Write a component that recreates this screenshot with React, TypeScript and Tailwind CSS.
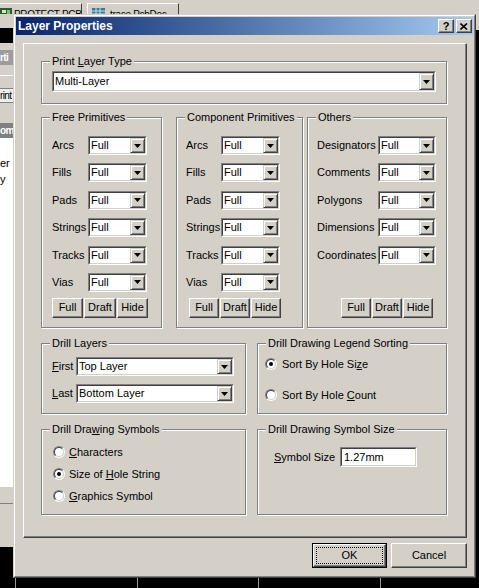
import React from 'react';

const FONT = "font-['Liberation_Sans',Arial,sans-serif]";
const RAISED =
  'bg-[#d4d0c8] border border-t-white border-l-white border-r-[#404040] border-b-[#404040] shadow-[inset_-1px_-1px_0_#808080]';

function Arrow() {
  return (
    <svg width="7" height="4" viewBox="0 0 7 4">
      <polygon points="0,0 7,0 3.5,4" fill="#000" />
    </svg>
  );
}

function Combo({ value, className }: { value: string; className: string }) {
  return (
    <div className={`flex shrink-0 border border-t-[#808080] border-l-[#808080] border-r-white border-b-white ${className}`}>
      <div className="flex flex-1 min-w-0 border border-t-[#404040] border-l-[#404040] border-r-[#d4d0c8] border-b-[#d4d0c8] bg-white">
        <span className="flex flex-1 items-center pl-[1px] whitespace-nowrap overflow-hidden">{value}</span>
        <div className="w-[15px] shrink-0 flex items-center justify-center bg-[#d4d0c8] border border-t-[#d4d0c8] border-l-[#d4d0c8] border-r-[#404040] border-b-[#404040] shadow-[inset_1px_1px_0_#fff,inset_-1px_-1px_0_#808080]">
          <Arrow />
        </div>
      </div>
    </div>
  );
}

function Group({ title, className, children }: { title: React.ReactNode; className: string; children?: React.ReactNode }) {
  return (
    <div className={`relative shrink-0 border border-[#808080] shadow-[inset_1px_1px_0_#fff,1px_1px_0_#fff] ${className}`}>
      <span className="absolute -top-[7px] left-[8px] bg-[#d4d0c8] px-[2px] leading-[13px] whitespace-nowrap">{title}</span>
      {children}
    </div>
  );
}

function Radio({ checked }: { checked?: boolean }) {
  return (
    <div className="w-[12px] h-[12px] shrink-0 rounded-full border border-t-[#808080] border-l-[#808080] border-r-white border-b-white">
      <div className="w-full h-full rounded-full border border-t-[#404040] border-l-[#404040] border-r-[#d4d0c8] border-b-[#d4d0c8] bg-white flex items-center justify-center">
        {checked && <div className="w-[4px] h-[4px] rounded-full bg-black" />}
      </div>
    </div>
  );
}

function RadioRow({ checked, gap, children }: { checked?: boolean; gap: string; children: React.ReactNode }) {
  return (
    <div className={`flex items-center h-[12px] ${gap}`}>
      <Radio checked={checked} />
      <span className="whitespace-nowrap leading-[13px]">{children}</span>
    </div>
  );
}

function Btn({ children, className }: { children: React.ReactNode; className: string }) {
  return <div className={`flex items-center justify-center shrink-0 ${RAISED} ${className}`}>{children}</div>;
}

function PrimRow({ label, col, combo }: { label: string; col: string; combo: string }) {
  return (
    <div className="flex items-center h-[19px]">
      <span className={`shrink-0 whitespace-nowrap ${col}`}>{label}</span>
      <Combo value="Full" className={`h-[19px] ${combo}`} />
    </div>
  );
}

function ModeButtons({ className, w1, w2, w3 }: { className: string; w1: string; w2: string; w3: string }) {
  return (
    <div className={`flex gap-[1px] mt-[6px] ${className}`}>
      <Btn className={`h-[20px] ${w1}`}>Full</Btn>
      <Btn className={`h-[20px] ${w2}`}>Draft</Btn>
      <Btn className={`h-[20px] ${w3}`}>Hide</Btn>
    </div>
  );
}

const prims = ['Arcs', 'Fills', 'Pads', 'Strings', 'Tracks', 'Vias'];
const others = ['Designators', 'Comments', 'Polygons', 'Dimensions', 'Coordinates'];

function LeftStrip() {
  return (
    <div className="w-[13px] shrink-0 flex flex-col overflow-hidden whitespace-nowrap text-[10px] tracking-[-0.6px]">
      <div className="h-[14px] shrink-0" />
      <div className="h-[15px] shrink-0 bg-black" />
      <div className="h-[7px] shrink-0" />
      <div className="h-[15px] shrink-0 bg-[#9c9c9c] text-white font-bold flex items-center">rti</div>
      <div className="h-[10px] shrink-0" />
      <div className="h-px shrink-0 bg-white" />
      <div className="h-[12px] shrink-0" />
      <div className="h-[15px] shrink-0 bg-[#efefef] border-y border-[#808080] flex items-center">rint</div>
      <div className="h-[20px] shrink-0" />
      <div className="h-[15px] shrink-0 bg-[#808080] text-white font-bold flex items-center">om</div>
      <div className="h-[349px] shrink-0 bg-white pt-[17px] leading-[16px] text-[11px] tracking-normal">
        <div>er</div>
        <div>y</div>
      </div>
      <div className="h-[16px] shrink-0" />
      <div className="h-px shrink-0 bg-[#808080]" />
      <div className="h-[43px] shrink-0" />
      <div className="flex-1 bg-black" />
    </div>
  );
}

function TitleBar() {
  return (
    <div className="h-[18px] shrink-0 flex items-center bg-linear-to-r from-[#0a246a] to-[#a6caf0] pl-[2px] pr-[1px]">
      <span className="flex-1 text-white font-bold text-[12px] leading-[14px]">Layer Properties</span>
      <div className="flex gap-[2px]">
        <Btn className="w-[16px] h-[14px] font-bold text-[11px] leading-none">?</Btn>
        <Btn className="w-[16px] h-[14px]">
          <svg width="8" height="7" viewBox="0 0 8 7">
            <path d="M0.5 0.5L7 6.5M7 0.5L0.5 6.5" stroke="#000" strokeWidth="1.6" />
          </svg>
        </Btn>
      </div>
    </div>
  );
}

function Dialog() {
  return (
    <div className="w-[463px] shrink-0 flex flex-col border border-t-[#d4d0c8] border-l-[#d4d0c8] border-r-[#404040] border-b-[#404040]">
      <div className="flex flex-1 flex-col border border-t-white border-l-white border-r-[#808080] border-b-[#808080] p-px">
        <TitleBar />
        <div className="flex flex-1 flex-col pl-[7px] pt-[8px]">
          {/* page */}
          <div className="w-[444px] h-[495px] shrink-0 flex flex-col pl-[17px] pt-[17px] border border-t-white border-l-white border-r-[#404040] border-b-[#404040] shadow-[inset_-1px_-1px_0_#808080]">
            <Group title={<>Print <u>L</u>ayer Type</>} className="w-[406px] h-[43px] pl-[10px] pt-[9px]">
              <Combo value="Multi-Layer" className="w-[384px] h-[21px]" />
            </Group>

            <div className="flex mt-[13px]">
              <Group title="Free Primitives" className="w-[121px] h-[211px] pl-[10px] pt-[18px]">
                <div className="flex flex-col gap-[8.4px]">
                  {prims.map(p => (
                    <PrimRow key={p} label={p} col="w-[36px]" combo="w-[59px]" />
                  ))}
                </div>
                <ModeButtons className="" w1="w-[31px]" w2="w-[32px]" w3="w-[31px]" />
              </Group>
              <Group title="Component Primitives" className="ml-[14px] w-[127px] h-[211px] pl-[9px] pt-[18px]">
                <div className="flex flex-col gap-[8.4px]">
                  {prims.map(p => (
                    <PrimRow key={p} label={p} col="w-[35px]" combo="w-[59px]" />
                  ))}
                </div>
                <ModeButtons className="ml-[3px]" w1="w-[30px]" w2="w-[30px]" w3="w-[30px]" />
              </Group>
              <Group title="Others" className="ml-[4px] w-[140px] h-[211px] pl-[9px] pt-[18px]">
                <div className="flex flex-col gap-[8.4px]">
                  {others.map(p => (
                    <PrimRow key={p} label={p} col="w-[61px]" combo="w-[58px]" />
                  ))}
                </div>
                <ModeButtons className="ml-[24px] mt-[33.4px]" w1="w-[30px]" w2="w-[30px]" w3="w-[30px]" />
              </Group>
            </div>

            <div className="flex mt-[15px]">
              <Group title="Drill Layers" className="w-[205px] h-[71px] pl-[10px] pt-[13px]">
                <div className="flex flex-col gap-[8px]">
                  <div className="flex items-center h-[19px]">
                    <span className="w-[24px] shrink-0"><u>F</u>irst</span>
                    <Combo value="Top Layer" className="w-[158px] h-[19px]" />
                  </div>
                  <div className="flex items-center h-[19px]">
                    <span className="w-[24px] shrink-0"><u>L</u>ast</span>
                    <Combo value="Bottom Layer" className="w-[158px] h-[19px]" />
                  </div>
                </div>
              </Group>
              <Group title="Drill Drawing Legend Sorting" className="ml-[11px] w-[190px] h-[71px] pl-[7px] pt-[14px]">
                <div className="flex flex-col gap-[19px]">
                  <RadioRow checked gap="gap-[5px]">Sort By Hole Si<u>z</u>e</RadioRow>
                  <RadioRow gap="gap-[5px]">Sort By Hole <u>C</u>ount</RadioRow>
                </div>
              </Group>
            </div>

            <div className="flex mt-[15px]">
              <Group title={<>Drill Dra<u>w</u>ing Symbols</>} className="w-[205px] h-[86px] pl-[11px] pt-[16px]">
                <div className="flex flex-col gap-[10px]">
                  <RadioRow gap="gap-[4px]"><u>C</u>haracters</RadioRow>
                  <RadioRow checked gap="gap-[4px]">Size of <u>H</u>ole String</RadioRow>
                  <RadioRow gap="gap-[4px]"><u>G</u>raphics Symbol</RadioRow>
                </div>
              </Group>
              <Group title="Drill Drawing Symbol Size" className="ml-[11px] w-[190px] h-[86px] pl-[16px] pt-[17px]">
                <div className="flex items-center h-[20px]">
                  <span className="w-[66px] shrink-0 whitespace-nowrap"><u>S</u>ymbol Size</span>
                  <div className="w-[77px] h-[20px] shrink-0 border border-t-[#808080] border-l-[#808080] border-r-white border-b-white">
                    <div className="w-full h-full flex items-center pl-[2px] bg-white border border-t-[#404040] border-l-[#404040] border-r-[#d4d0c8] border-b-[#d4d0c8]">
                      1.27mm
                    </div>
                  </div>
                </div>
              </Group>
            </div>
          </div>

          {/* buttons */}
          <div className="flex justify-end gap-[4px] pr-[6px] mt-[5px]">
            <div className="w-[75px] h-[25px] border border-black">
              <div className={`w-full h-full p-[2px] ${RAISED}`}>
                <div className="w-full h-full border border-dotted border-black flex items-center justify-center">OK</div>
              </div>
            </div>
            <Btn className="w-[76px] h-[25px]">Cancel</Btn>
          </div>
        </div>
      </div>
    </div>
  );
}

function Tabs() {
  return (
    <div className="h-[14px] shrink-0 flex overflow-hidden text-[10px] tracking-[-0.3px]">
      <div className="w-[82px] shrink-0 mt-[3px] h-[20px] border-t border-white border-r border-r-[#404040] flex items-start pt-[4px]">
        <svg width="13" height="9" viewBox="0 0 13 9" className="shrink-0">
          <rect x="0" y="0" width="12" height="9" fill="#2e5a2e" />
          <rect x="2" y="2" width="4" height="3" fill="#cfe8cf" />
          <rect x="7" y="2" width="3" height="5" fill="#7fbf7f" />
        </svg>
        <span className="ml-[1px] mt-[1px] leading-[12px] whitespace-nowrap">PROTECT PCB</span>
      </div>
      <div className="w-[92px] ml-[5px] shrink-0 mt-[3px] h-[20px] border-t border-l border-white border-r border-r-[#404040] flex items-start pt-[4px] pl-[4px]">
        <svg width="13" height="9" viewBox="0 0 13 9" className="shrink-0">
          <rect x="0" y="0" width="13" height="9" fill="#3c7890" />
          <path d="M0 3H13M0 6H13M4 0V9M8 0V9" stroke="#bfe3ef" strokeWidth="1" />
        </svg>
        <span className="ml-[5px] mt-[1px] leading-[12px] whitespace-nowrap">trace.PcbDoc</span>
      </div>
    </div>
  );
}

export default function App() {
  return (
    <div className={`w-[479px] h-[588px] overflow-hidden bg-[#d4d0c8] flex flex-col text-[11px] leading-[13px] text-black ${FONT}`}>
      <Tabs />
      <div className="flex h-[564px] shrink-0">
        <LeftStrip />
        <Dialog />
        <div className="w-[3px] shrink-0 flex flex-col">
          <div className="h-[16px] shrink-0" />
          <div className="flex-1 bg-black" />
        </div>
      </div>
      <div className="flex-1 flex bg-black">
        <div className="w-[15px] shrink-0" />
        <div className="w-px shrink-0 bg-[#9a9a9a]" />
        <div className="w-[121px] shrink-0" />
        <div className="w-px shrink-0 bg-[#9a9a9a]" />
        <div className="w-[120px] shrink-0" />
        <div className="w-px shrink-0 bg-[#9a9a9a]" />
        <div className="w-[121px] shrink-0" />
        <div className="w-px shrink-0 bg-[#9a9a9a]" />
      </div>
    </div>
  );
}
